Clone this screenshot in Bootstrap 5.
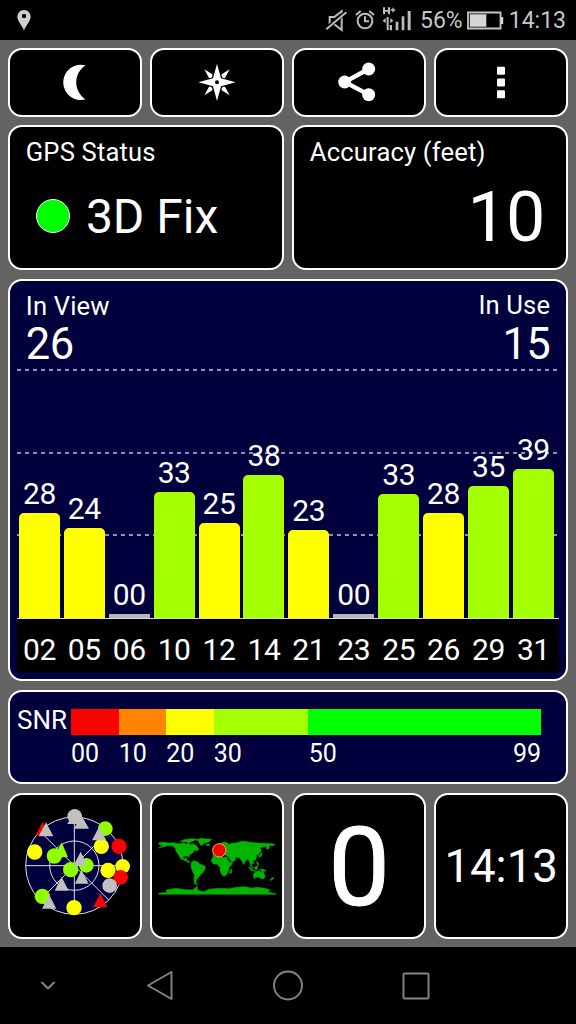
<!DOCTYPE html>
<html lang="en">
<head>
<meta charset="utf-8">
<meta name="viewport" content="width=device-width, initial-scale=1">
<title>GPS Status</title>
<link href="https://cdn.jsdelivr.net/npm/bootstrap@5.3.0/dist/css/bootstrap.min.css" rel="stylesheet">
<style>
  body { font-family: Roboto, "Liberation Sans", sans-serif; background: #636363; color: #fff; height: 1024px; overflow: hidden; }
  svg { display: block; flex: none; }
  .status-bar { height: 40px; background: #000; color: #c6c6c6; font-size: 23px; line-height: 40px; padding: 2px 10px 0 15px; }
  .deck { height: 907px; padding: 8px 8.2px 8px 8.4px; gap: 8.7px; }
  .deck-row { gap: 8.7px; }
  .tile { background: #000; border: 2px solid #fff; border-radius: 14px; flex: 1 1 0; min-width: 0; }
  .navy { background: #00003c; }
  .h-tools { height: 68.5px; flex: none; }
  .h-info { height: 145px; flex: none; }
  .h-chart { height: 402.3px; flex: none; }
  .h-snr { height: 94px; flex: none; }
  .h-foot { height: 146px; flex: none; }
  .label { font-size: 25.6px; line-height: 30px; letter-spacing: .16px; }
  .inset { padding-left: 15.4px; padding-right: 15.6px; }
  .fix { font-size: 48px; line-height: 56px; position: relative; top: 1px; }
  .fix-dot { width: 34px; height: 34px; background: #0f0; border: 1.5px solid #e4ffe4; }
  .big-num { font-size: 70px; line-height: 80px; letter-spacing: -1px; }
  .mid-num { font-size: 43.5px; line-height: 46px; letter-spacing: -.6px; }
  .plot { height: 337.6px; margin: 0 6.5px; padding-left: 2px; padding-right: 5.4px; position: relative; }
  .grid-line { position: absolute; left: 0; right: 2px; height: 1.4px; background: repeating-linear-gradient(90deg, #8f8fb4 0 4px, transparent 4px 8px); }
  .sat { width: 41px; font-size: 30px; line-height: 37px; letter-spacing: -.4px; position: relative; }
  .sat-bar { width: 41px; border-radius: 5px 5px 0 0; margin-top: 1px; }
  .c-yellow { background: #ff0; }
  .c-lime { background: #a4ff00; }
  .c-none { background: #b4b4c0; border-radius: 0; }
  .ids { height: 54px; margin: 0 6.5px; padding-left: 2px; padding-right: 5.4px; border-top: 1.4px solid #d8d8d8; background: #000; font-size: 30px; line-height: 61px; letter-spacing: -.4px; }
  .ids > div { width: 41px; text-align: center; }
  .snr-name { width: 54px; font-size: 26px; line-height: 22px; }
  .snr-scale { width: 470px; }
  .snr-bar { height: 26px; }
  .snr-num { font-size: 25px; line-height: 30px; }
  .zero { font-size: 110px; line-height: 146px; -webkit-text-stroke: 1px #fff; }
  .clock { font-size: 45.6px; line-height: 60px; padding-top: 3px; }
  .nav-keys { height: 77px; background: #000; }
</style>
</head>
<body class="d-flex flex-column">

<header class="status-bar d-flex align-items-center justify-content-between">
  <svg width="18" height="24" viewBox="0 0 18 24"><path fill="#cfcfcf" fill-rule="evenodd" d="M9 1a6.700 6.700 0 0 0-6.700 6.700C2.300 12 7 16 9 21.500c2-5.500 6.700-9.500 6.700-13.800A6.700 6.700 0 0 0 9 1zm0 3.800a2.200 2.200 0 1 1 0 4.400 2.200 2.200 0 0 1 0-4.400z"/></svg>
  <div class="d-flex align-items-center">
    <svg width="96" height="40" viewBox="-3 2 288 120">
      <g fill="none" stroke="#bdbdbd" stroke-width="6">
        <path d="M14 50h14l22-17v56L28 72H14z"/><path d="M4 85L64 34" stroke="#000" stroke-width="12"/><path d="M4 87L64 36"/>
        <circle cx="120" cy="62" r="22"/><path d="M120 48v15h12M93 44l14-12M147 44l-14-12"/>
      </g>
      <g fill="#bdbdbd">
        <path d="M174 21h6v8h9v-8h6v21h-6v-8h-9v8h-6zM202 22h4v5h5v4h-5v5h-4v-5h-5v-4h5zM173 61l9-8v16zM205 61l-9-8v16zM185 50h6v40h-6zM194 74h7v16h-7zM212 64h8v26h-8zM230 48h8v42h-8zM248 32h9v58h-9z"/>
      </g>
    </svg>
    <span>56%</span>
    <svg width="38" height="20" viewBox="0 0 38 20" class="ms-1"><path d="M1 1.500h32.500v16H1z" fill="none" stroke="#c6c6c6" stroke-width="1.800"/><path d="M2.800 3.300h16.500v12.400H2.800zM34 6h2.200v7H34z" fill="#d6d6d6"/></svg>
    <span class="ms-1">14:13</span>
  </div>
</header>

<main class="deck d-flex flex-column">
  <div class="deck-row h-tools d-flex">
    <div class="tile d-flex align-items-center justify-content-center">
      <svg width="40" height="40" viewBox="165 187 120 120"><path fill="#fff" d="M257 197A53 53 0 1 0 257 299A60 60 0 0 1 257 197z"/></svg>
    </div>
    <div class="tile d-flex align-items-center justify-content-center">
      <svg width="40" height="40" viewBox="-60 -61 120 120"><g fill="#fff"><path fill-rule="evenodd" d="M0-56L12-12 56 0 12 12 0 56-12 12-56 0-12-12zM0-6a6 6 0 1 0 0 12 6 6 0 0 0 0-12z"/><path d="M-38-39L-14-24V-18L-18-13H-24zM38-39L14-24V-18L18-13H24zM-38 39L-14 24V18L-18 13H-24zM38 39L14 24V18L18 13H24z"/></g></svg>
    </div>
    <div class="tile d-flex align-items-center justify-content-center">
      <svg width="42" height="42" viewBox="155 64 126 126"><path d="M247 88L175 127L247 165" fill="none" stroke="#fff" stroke-width="13"/><g fill="#fff"><circle cx="175" cy="127" r="19.500"/><circle cx="247" cy="88" r="19.500"/><circle cx="247" cy="165" r="19.500"/></g></svg>
    </div>
    <div class="tile d-flex align-items-center justify-content-center">
      <svg width="10" height="34" viewBox="0 -.5 10 34"><g fill="#fff"><rect x="1" y="1.300" width="8" height="8" rx="1"/><rect x="1" y="13" width="8" height="8" rx="1"/><rect x="1" y="24.700" width="8" height="8" rx="1"/></g></svg>
    </div>
  </div>

  <div class="deck-row h-info d-flex">
    <section class="tile inset">
      <div class="label" style="margin-top:10px">GPS Status</div>
      <div class="d-flex align-items-center" style="margin:21px 0 0 10.300px;gap:15.800px">
        <span class="fix-dot rounded-circle"></span><span class="fix">3D Fix</span>
      </div>
    </section>
    <section class="tile inset">
      <div class="label" style="margin-top:10px">Accuracy (feet)</div>
      <div class="big-num text-end" style="margin:10px 6px 0 0">10</div>
    </section>
  </div>

  <section class="tile navy h-chart">
    <div class="d-flex justify-content-between inset" style="height:0">
      <div><div class="label" style="margin-top:10px">In View</div><div class="mid-num" style="margin-top:1px">26</div></div>
      <div class="text-end"><div class="label" style="margin-top:9.500px">In Use</div><div class="mid-num" style="margin-top:1.200px">15</div></div>
    </div>
    <div class="plot d-flex justify-content-between align-items-end">
      <div class="grid-line" style="top:88.500px"></div><div class="grid-line" style="top:171.500px"></div><div class="grid-line" style="top:253.500px"></div>
      <div class="sat text-center">28<div class="sat-bar c-yellow" style="height:105px"></div></div>
      <div class="sat text-center">24<div class="sat-bar c-yellow" style="height:90.500px"></div></div>
      <div class="sat text-center">00<div class="sat-bar c-none" style="height:4px"></div></div>
      <div class="sat text-center">33<div class="sat-bar c-lime" style="height:126.500px"></div></div>
      <div class="sat text-center">25<div class="sat-bar c-yellow" style="height:95.500px"></div></div>
      <div class="sat text-center">38<div class="sat-bar c-lime" style="height:143.500px"></div></div>
      <div class="sat text-center">23<div class="sat-bar c-yellow" style="height:88.500px"></div></div>
      <div class="sat text-center">00<div class="sat-bar c-none" style="height:4px"></div></div>
      <div class="sat text-center">33<div class="sat-bar c-lime" style="height:124.500px"></div></div>
      <div class="sat text-center">28<div class="sat-bar c-yellow" style="height:105.500px"></div></div>
      <div class="sat text-center">35<div class="sat-bar c-lime" style="height:132px"></div></div>
      <div class="sat text-center">39<div class="sat-bar c-lime" style="height:149.500px"></div></div>
    </div>
    <div class="ids d-flex justify-content-between">
      <div>02</div><div>05</div><div>06</div><div>10</div><div>12</div><div>14</div><div>21</div><div>23</div><div>25</div><div>26</div><div>29</div><div>31</div>
    </div>
  </section>

  <section class="tile navy h-snr d-flex" style="padding:17px 0 0 6.600px">
    <div class="snr-name">SNR</div>
    <div class="snr-scale">
      <div class="snr-bar d-flex">
        <div style="width:47.700px;background:#f00"></div><div style="width:47.500px;background:#ff8400"></div><div style="width:47.500px;background:#ff0"></div><div style="width:94.300px;background:#a4ff00"></div><div class="flex-fill" style="background:#0f0"></div>
      </div>
      <div class="snr-num d-flex" style="margin-top:4px">
        <div style="width:47.700px">00</div><div style="width:47.500px">10</div><div style="width:47.500px">20</div><div style="width:95px">30</div><div>50</div><div class="ms-auto">99</div>
      </div>
    </div>
  </section>

  <div class="deck-row h-foot d-flex">
    <section class="tile d-flex align-items-center justify-content-center">
      <svg width="110" height="113.300" viewBox="36 58 330 340">
        <circle cx="199" cy="228" r="146" fill="#00003c"/>
        <g fill="none" stroke="#dcdce8" stroke-width="3"><circle cx="199" cy="228" r="146"/><circle cx="199" cy="228" r="74"/><path d="M199 82V374M53 228H345M96 125L302 331M302 125L96 331"/></g>
        <path d="M83 137L104 96L122 137z" fill="#f00"/>
        <g fill="#c0c0c0"><path d="M92 140L114 98L136 140zM178 103L199 65L222 103zM198 117L220 76L243 117zM140 303L161 262L182 303zM201 282L220 240L242 282z"/><circle cx="200" cy="80" r="22"/></g>
        <g fill="#90ff00"><circle cx="292" cy="117" r="22"/><circle cx="139" cy="199" r="23"/><path d="M139 203L161 158L180 203z"/><circle cx="235" cy="227" r="22"/><circle cx="188" cy="240" r="23"/><circle cx="103" cy="320" r="23"/></g>
        <g fill="#ff0"><circle cx="80" cy="187" r="23"/><circle cx="280" cy="170" r="23"/><circle cx="344" cy="230" r="22"/><circle cx="300" cy="242" r="23"/><circle cx="198" cy="354" r="23"/></g>
        <g fill="#f00"><circle cx="333" cy="170" r="23"/><circle cx="338" cy="263" r="22"/><path d="M256 352L277 311L298 352z"/></g>
        <g fill="#c0c0c0"><circle cx="305" cy="288" r="22"/><path d="M252 152L273 112L295 152zM197 227L218 186L238 227zM102 357L124 316L145 357z"/></g>
      </svg>
    </section>
    <section class="tile d-flex align-items-center justify-content-center">
      <svg width="120" height="60" viewBox="26 33 360 180">
        <g fill="#00b400" stroke="#00b400" stroke-width="1.500">
          <path d="M30 54L44 51L62 54L76 53L92 56L106 54L116 58L120 53L127 59L134 56L145 62L151 72L147 78L140 76L132 85L124 89L122 97L117 92L106 94L104 101L109 102L115 98L114 105L121 108L125 112L120 112L111 107L99 103L92 92L84 80L80 68L70 62L58 62L48 65L30 69L43 62L34 59z"/>
          <path d="M96 50L106 44L126 41L145 42L137 47L128 50L122 54L111 50zM142 45L158 40L190 43L183 50L169 54L159 62L153 55L151 48zM174 58L184 57L183 61L175 62z"/>
          <path d="M129 111L137 107L150 112L154 117L171 124L170 132L165 142L158 147L151 157L145 162L143 173L148 179L140 177L137 167L138 151L132 137L128 126z"/>
          <path d="M194 95L207 91L217 92L218 96L226 97L235 96L238 104L246 113L253 112L250 119L242 127L241 139L235 148L228 154L220 149L216 138L215 127L207 118L196 117L188 108zM247 133L251 134L249 145L244 145z"/>
          <path d="M194 82L199 76L208 70L208 63L218 54L231 51L243 58L249 55L266 53L282 48L302 51L326 54L350 55L379 57L378 61L363 62L361 71L355 73L354 65L343 65L335 69L340 78L333 84L330 92L323 88L325 97L321 105L313 108L318 117L310 115L309 121L315 131L308 127L304 110L298 102L290 110L286 119L281 108L274 99L262 97L261 106L250 111L240 96L233 91L225 88L219 91L211 80L202 84L200 91L193 91zM196 63L202 66L202 73L194 75zM338 85L342 83L339 94L331 97z"/>
          <path d="M300 125L315 136L324 139L309 137zM319 126L328 122L326 134L319 132zM333 132L347 133L354 139L340 138zM325 109L329 113L332 121L326 117zM317 144L328 138L334 137L339 142L343 136L348 148L351 156L344 162L338 160L329 156L317 160L315 151zM366 163L376 156L375 161L367 167z"/>
          <path d="M31 205L57 202L53 195L83 190L111 194L132 195L141 188L148 184L146 192L155 198L167 200L182 193L214 190L243 191L265 187L290 185L307 189L329 187L354 191L365 195L359 201L382 206V208H31z"/>
        </g>
        <circle cx="213" cy="76" r="20" fill="#f00" stroke="#ff9c70" stroke-width="3"/>
      </svg>
    </section>
    <section class="tile zero text-center">0</section>
    <section class="tile clock d-flex align-items-center justify-content-center">14:13</section>
  </div>
</main>

<footer class="nav-keys">
  <svg width="576" height="77" viewBox="0 0 576 77" fill="none" stroke="#858585" stroke-width="1.900" stroke-linejoin="round" stroke-linecap="round">
    <path d="M42 35.500l6 6 6-6" stroke-width="2"/>
    <path d="M148 38.500L171.500 25V52z"/>
    <circle cx="288" cy="38.500" r="14"/>
    <rect x="403.500" y="26.500" width="25" height="25" rx="1"/>
  </svg>
</footer>

<script src="https://cdn.jsdelivr.net/npm/bootstrap@5.3.0/dist/js/bootstrap.bundle.min.js"></script>
</body>
</html>
